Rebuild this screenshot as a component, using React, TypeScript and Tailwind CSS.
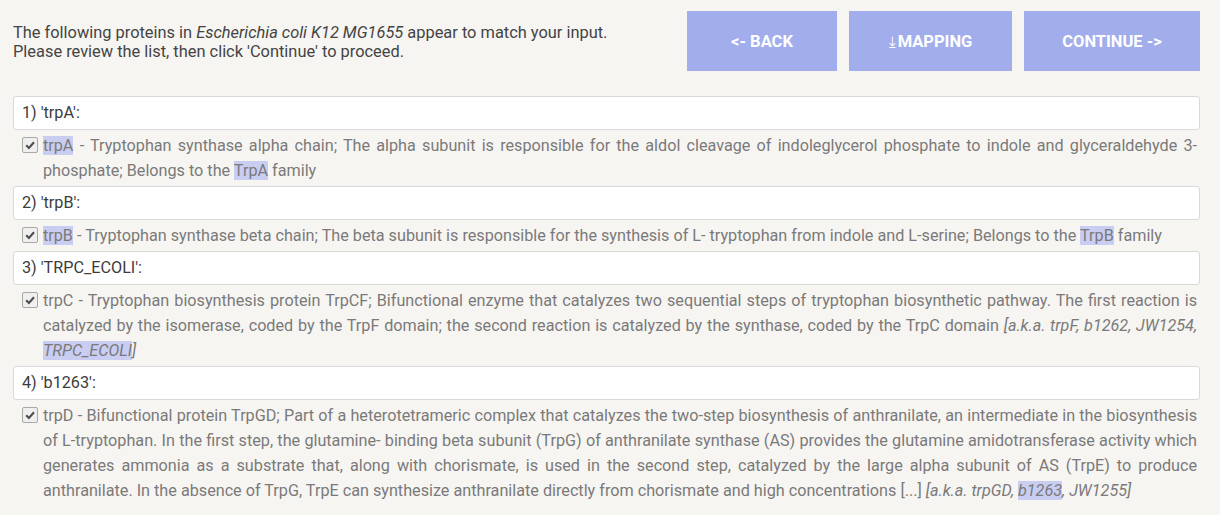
import React from "react";

type Item = {
  query: string;
  body: React.ReactNode;
};

function Hl({ children }: { children: React.ReactNode }) {
  return <span className="bg-[#c9cdf2]">{children}</span>;
}

function Check() {
  return (
    <span className="mt-[4px] flex h-[16px] w-[16px] flex-shrink-0 items-center justify-center rounded-[2px] border border-[#a8a8a8] bg-[#efefef]">
      <svg width="12" height="12" viewBox="0 0 12 12">
        <path d="M2.2 6.2 L4.9 8.9 L10 3.3" fill="none" stroke="#4d4d4d" strokeWidth="2.1" />
      </svg>
    </span>
  );
}

const items: Item[] = [
  {
    query: "1) 'trpA':",
    body: (
      <>
        <Hl>trpA</Hl> - Tryptophan synthase alpha chain; The alpha subunit is responsible for the aldol cleavage of
        indoleglycerol phosphate to indole and glyceraldehyde 3-phosphate; Belongs to the <Hl>TrpA</Hl> family
      </>
    ),
  },
  {
    query: "2) 'trpB':",
    body: (
      <>
        <Hl>trpB</Hl> - Tryptophan synthase beta chain; The beta subunit is responsible for the synthesis of L-
        tryptophan from indole and L-serine; Belongs to the <Hl>TrpB</Hl> family
      </>
    ),
  },
  {
    query: "3) 'TRPC_ECOLI':",
    body: (
      <>
        trpC - Tryptophan biosynthesis protein TrpCF; Bifunctional enzyme that catalyzes two sequential steps of
        tryptophan biosynthetic pathway. The first reaction is catalyzed by the isomerase, coded by the TrpF domain; the
        second reaction is catalyzed by the synthase, coded by the TrpC domain{" "}
        <i>
          [a.k.a. trpF, b1262, JW1254, <Hl>TRPC_ECOLI</Hl>]
        </i>
      </>
    ),
  },
  {
    query: "4) 'b1263':",
    body: (
      <>
        trpD - Bifunctional protein TrpGD; Part of a heterotetrameric complex that catalyzes the two-step biosynthesis
        of anthranilate, an intermediate in the biosynthesis of L-tryptophan. In the first step, the glutamine- binding
        beta subunit (TrpG) of anthranilate synthase (AS) provides the glutamine amidotransferase activity which
        generates ammonia as a substrate that, along with chorismate, is used in the second step, catalyzed by the large
        alpha subunit of AS (TrpE) to produce anthranilate. In the absence of TrpG, TrpE can synthesize anthranilate
        directly from chorismate and high concentrations [...]{" "}
        <i>
          [a.k.a. trpGD, <Hl>b1263</Hl>, JW1255]
        </i>
      </>
    ),
  },
];

export default function App() {
  return (
    <div className="min-h-[515px] bg-[#f7f5f2] pl-[13px] pr-[20px] pt-[11px] font-['Roboto',sans-serif]">
      {/* Header */}
      <div className="flex items-start justify-between">
        <p className="pt-[12px] text-[16.4px] leading-[19px] text-[#444]">
          The following proteins in <i>Escherichia coli K12 MG1655</i> appear to match your input.
          <br />
          Please review the list, then click 'Continue' to proceed.
        </p>
        <div className="flex gap-[12px]">
          <button className="h-[60px] w-[150px] bg-[#a2aeeb] pt-[2px] text-[16.5px] font-bold text-white">&lt;- BACK</button>
          <button className="h-[60px] w-[163px] bg-[#a2aeeb] pt-[2px] text-[16.5px] font-bold text-white">
            <span className="mr-[2px] font-['DejaVu_Sans',sans-serif] text-[15px] font-normal">⤓</span>MAPPING
          </button>
          <button className="h-[60px] w-[176px] bg-[#a2aeeb] pt-[2px] text-[16.5px] font-bold text-white">CONTINUE -&gt;</button>
        </div>
      </div>

      {/* Results */}
      <div className="mt-[25px] flex flex-col">
        {items.map((it) => (
          <div key={it.query} className="flex flex-col">
            <div className="flex h-[34px] items-center rounded-[3px] border border-[#d9d9d9] bg-white px-[8px] text-[16.2px] text-[#3c3c3c]">
              {it.query}
            </div>
            <div className="flex gap-[5px] pb-[3px] pl-[9px] pr-[3px] pt-[3px]">
              <Check />
              <p className="text-justify text-[16.2px] leading-[25px] text-[#7a7a7a]">{it.body}</p>
            </div>
          </div>
        ))}
      </div>
    </div>
  );
}
